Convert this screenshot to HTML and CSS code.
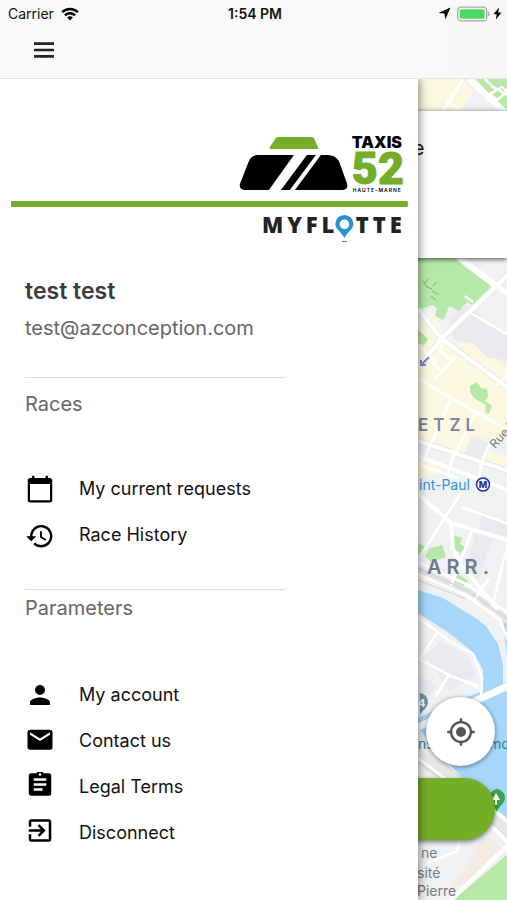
FILE: index.html
```html
<!DOCTYPE html>
<html lang="en">
  <head>
    <meta charset="UTF-8" />
    <meta name="viewport" content="width=device-width, initial-scale=1" />
    <title>MyFlotte</title>
    <link rel="stylesheet" href="styles.css">
  </head>
  <body>
    <header class="header">
      <div class="status">
        <div class="status-left">
          <span>Carrier</span>
          <svg width="18" height="14" viewBox="0 0 18 14" aria-hidden="true">
            <g fill="none" stroke="#000" stroke-width="2.4">
              <path d="M1.2 5.2a11 11 0 0 1 15.6 0" />
              <path d="M4 8.4a7 7 0 0 1 10 0" />
            </g>
            <path d="M9 13.4L6.2 10.6a4 4 0 0 1 5.6 0z" />
          </svg>
        </div>
        <b class="time">1:54 PM</b>
        <div class="status-right">
          <svg width="13" height="13" viewBox="0 0 13 13" aria-hidden="true">
            <path d="M12.5 .5L7.3 12.5 6.5 6.6.5 6z" />
          </svg>
          <svg width="33" height="16" viewBox="0 0 33 16" aria-hidden="true">
            <rect x=".7" y="1.2" width="29" height="13.6" rx="3.5" fill="#fff" stroke="#a8a8a8" stroke-width="1.3" />
            <rect x="2.6" y="3.2" width="25" height="9.6" rx="1.5" fill="#4cd964" />
            <path d="M31 5.5q1.6.8 1.6 2.5T31 10.5z" fill="#a8a8a8" />
          </svg>
          <svg width="9" height="13" viewBox="0 0 9 13" aria-hidden="true">
            <path d="M6 .5L.5 7.2h3.2L2.8 12.5 8.5 5.4H5.2z" />
          </svg>
        </div>
      </div>
      <div class="toolbar">
        <button class="menu-button" aria-label="Menu">
          <svg width="20" height="16" viewBox="0 0 20 16" aria-hidden="true">
            <path d="M0 1.6h20M0 8h20M0 14.4h20" stroke="#222" stroke-width="2.6" />
          </svg>
        </button>
      </div>
    </header>

    <div class="stage">
      <nav class="drawer">
        <svg class="logo" viewBox="11 133 397 112" role="img" aria-label="Taxis 52 Haute-Marne, MyFlotte">
          <path d="M276 138q1-1 3-1h32q2 0 3 1l4 9q1 2-1 2h-46q-2 0-1-2z" fill="#74ae28" />
          <path d="M257 155h37l-25 35h-25q-5-1-4-6l9-23q2-5 8-6z" />
          <path d="M307 155h9l-26 35h-9z" />
          <path d="M321 155h7q7 0 11 6l8 22q2 6-4 7h-48z" />
          <text x="352" y="148" class="logo-taxis">TAXIS</text>
          <text x="352" y="184" class="logo-number">52</text>
          <text x="353" y="192" class="logo-region">HAUTE-MARNE</text>
          <rect x="11" y="201" width="397" height="6" rx="1" fill="#74ae28" />
          <text x="262" y="233" class="logo-name">MYFL</text>
          <path d="M344.500 215a9 9 0 0 0-9 9c0 5 5 7 9 14 4-7 9-9 9-14a9 9 0 0 0-9-9zm0 4.500a4.800 4.800 0 1 1 0 9.600 4.800 4.800 0 0 1 0-9.600z" fill="#2593d1" fill-rule="evenodd" />
          <path d="M342 241.500h5" stroke="#777" />
          <text x="356" y="233" class="logo-name">TTE</text>
        </svg>

        <div class="user">
          <h1 class="user-name">test test</h1>
          <p class="user-mail">test@azconception.com</p>
        </div>

        <section class="group">
          <h2 class="group-title">Races</h2>
          <ul class="menu">
            <li>
              <a href="#requests">
                <svg viewBox="0 0 24 24" aria-hidden="true">
                  <path d="M19.800 3.200H18.300V1.300h-1.800v1.900H7.500V1.300H5.700v1.900H4.200C3 3.200 2.200 4 2.200 5v15.900c0 1 .8 1.800 1.800 1.800h16c1 0 1.800-.8 1.800-1.800V5c0-1-.8-1.800-2-1.800zM20 20.900H4V8h16z" />
                </svg>
                My current requests
              </a>
            </li>
            <li>
              <a href="#history">
                <svg viewBox="0 0 24 24" aria-hidden="true">
                  <path d="M13 4a9 9 0 0 0-9 9H1l3.900 3.900.1.100L9 13H6a7 7 0 1 1 2.100 4.900l-1.500 1.500A9 9 0 1 0 13 4zm-1 5v5l4.300 2.500.7-1.200-3.500-2.100V9z" />
                </svg>
                Race History
              </a>
            </li>
          </ul>
        </section>

        <section class="group group-params">
          <h2 class="group-title">Parameters</h2>
          <ul class="menu">
            <li>
              <a href="#account">
                <svg viewBox="0 0 24 24" aria-hidden="true">
                  <path d="M12 12a4 4 0 1 0 0-8 4 4 0 0 0 0 8zm0 2c-2.700 0-8 1.300-8 4v2h16v-2c0-2.700-5.300-4-8-4z" />
                </svg>
                My account
              </a>
            </li>
            <li>
              <a href="#contact">
                <svg viewBox="0 0 24 24" aria-hidden="true">
                  <path d="M20 3H4a2 2 0 0 0-2 2v12c0 1.100.9 2 2 2h16a2 2 0 0 0 2-2V5a2 2 0 0 0-2-2zm0 4l-8 5-8-5V5l8 5 8-5z" />
                </svg>
                Contact us
              </a>
            </li>
            <li>
              <a href="#legal">
                <svg viewBox="0 0 24 24" aria-hidden="true">
                  <path d="M19 1h-4.200a3 3 0 0 0-5.600 0H5a2 2 0 0 0-2 2v14c0 1.100.9 2 2 2h14a2 2 0 0 0 2-2V3a2 2 0 0 0-2-2zm-7 0a1 1 0 1 1 0 2 1 1 0 0 1 0-2zm2 14H7v-2h7zm3-4H7V9h10zm0-4H7V5h10z" />
                </svg>
                Legal Terms
              </a>
            </li>
            <li>
              <a href="#logout">
                <svg viewBox="0 0 24 24" aria-hidden="true">
                  <path d="M10.100 13.600L11.500 15l5-5-5-5-1.400 1.400L12.700 9H3v2h9.700zM19 1H5a2 2 0 0 0-2 2v4h2V3h14v14H5v-4H3v4c0 1.100.9 2 2 2h14a2 2 0 0 0 2-2V3a2 2 0 0 0-2-2z" />
                </svg>
                Disconnect
              </a>
            </li>
          </ul>
        </section>
      </nav>

      <main class="content">
        <svg class="map" viewBox="417 79 90 821" preserveAspectRatio="xMinYMin slice" aria-hidden="true">
          <rect x="417" y="79" width="90" height="821" fill="#f0f1f3" />
          <!-- blocks -->
          <g fill="#fcf7e0">
            <path d="M417 79h45l10 14-12 18h-43z" />
            <path d="M417 312l18 2 6 18 14 13 14-6 38 28v76l-16-4-20-4-8 18-46-18z" />
            <path d="M417 458l30 12-30 8zM482 450l25 6v14l-30-8z" />
          </g>
          <g fill="#e9eaee">
            <path d="M447 318l18-12 42 30v24l-20-2-14-14-20-4z" />
            <path d="M470 438l20 5-8 17-18-5zM482 512l25 12v16l-30-8zM474 534l18 5-14 40-14-10z" />
            <path d="M425 655l14-14 28 15 8 18-26 18zM417 676l20 9-20 22z" />
          </g>
          <!-- parks -->
          <g fill="#b6e9a8">
            <path d="M475 79h32v33l-6-2z" />
            <path d="M417 258h41l33 28-20 19-5-3-8 9-10-5-2 6-4 8-8-4 2-8-5-3-14 5z" />
            <path d="M417 330l10 9-4 6-6-2zM469 386l7-4 4 6 6 1 1 8-3 4 7 5-3 8-4-2 1-7-12-7-4-6z" />
            <path d="M417 543l7 4-2 8-5-2zM429 548l12-3 4 12-15 5-6-6zM453 535l8 3-2 6 5 3-4 6-9-4zM450 583l7-9 10 7-9 10z" />
            <path d="M507 854v46h-55z" />
          </g>
          <path d="M466 866l17-30 21 13-38 34-18 6z" fill="#f2ebe4" />
          <!-- river -->
          <g fill="#a6d7fb">
            <path d="M417 590l25 8 34 21 9 7 12 18 5 20v25l-20 8v-27l-9-17-25-20-31-20z" />
            <path d="M417 718l30-14 60-22v138l-48-44-42-48zM502 620l5 5v40z" />
          </g>
          <path d="M417 748l35 24 55 52v24l-40-50-50-32z" fill="#e7e9e9" />
          <!-- road edges -->
          <g fill="none" stroke="#e2e4e8" stroke-width="6">
            <path d="M417 309l23 29 67 50M507 275L441 338l-24 30M417 570l50 21 40 28M417 441l90 30" />
          </g>
          <g fill="none" stroke="#fff" stroke-width="2.500">
            <path d="M462 79l-20 32M446 101l18 12M475 84l12 11 14-8 6 5M484 79l8 8 15 8M489 94l7 6 11-9" />
            <path d="M468 312l39 23M464 296l8 6M417 378l33 20 57 32M450 398l-30 68M475 412l-28 57M433 380l22-23M437 349l14 12M437 349l9-9M427 360l14 11M417 346l18 16M507 374l-12 12" />
            <path d="M490 441l-12 26M454 450l-8 28M417 464l40 14M460 493l-43 66M472 528l-22 58M507 543l-16 64M472 602l16-24M461 507l46 17M482 458l-8 38" />
            <path d="M417 617l30 23 25 14 9 24-1 20M436 633l-18 27M418 659l30 16 30 12M448 675l-14 22M450 820l10 16-4 15-30 12M417 758l40 30" />
          </g>
          <g fill="none" stroke="#fff" stroke-width="4.500">
            <path d="M457 257l38 29M468 79l36 33" stroke-width="6" />
            <path d="M417 309l23 29 67 50M507 275L441 338l-24 30M496 286l11 8" />
            <path d="M417 441l90 30M417 456l90 34M417 494l33 29 57 17M450 523l2 26 9 17 36 44" stroke-width="4" />
            <path d="M417 562l50 23 40 28M417 574l48 21 33 24 9 20" stroke-width="3" />
            <path d="M417 727l90-41" stroke-width="7" />
            <path d="M495 812l12 9M507 845L450 900M492 826l15 17" />
          </g>
          <g fill="none" stroke="#cbd1c8" stroke-width="1">
            <path d="M417 568l50 23 40 28M417 762l38 28 52 48M440 761l67 58M417 580l48 19" />
            <path d="M422 281l4 6 5 2M427 279l-3 4M431 291l6 3M432 286l4-4M430 296l5 4" stroke="#6fb778" />
          </g>
          <path d="M428 357l-8 8m0-5v5h5" fill="none" stroke="#8087b8" stroke-width="2" />
          <!-- labels -->
          <text x="417" y="431" class="map-area">ETZL</text>
          <text x="426" y="574" class="map-area map-district">ARR.</text>
          <text x="494" y="449" class="map-street map-rue" transform="rotate(-48 494 449)">Rue P</text>
          <text x="418" y="490" class="map-metro">int-Paul</text>
          <circle cx="482" cy="484.500" r="6.500" fill="#fff" stroke="#2e2c91" stroke-width="1.500" />
          <text x="482" y="488" class="map-m">M</text>
          <text x="417" y="749" class="map-place">ns</text>
          <text x="488" y="749" class="map-place">mo</text>
          <path d="M419 693a9 9 0 0 1 8 9c0 6-6 8-8 13z" fill="#6d8fa8" />
          <text x="417" y="707" class="map-pin-number">4</text>
          <path d="M496 789a9 9 0 0 1 8 9c0 6-7 8-8 14-2-6-8-8-8-14a9 9 0 0 1 8-9z" fill="#3ba549" />
          <path d="M495 793l4 7h-3v5h-2v-5h-3z" fill="#fff" />
          <text x="420" y="858" class="map-street">ne</text>
          <text x="416" y="878" class="map-street">sité</text>
          <text x="416" y="896" class="map-street">Pierre</text>
        </svg>

        <div class="card">e</div>
        <div class="actions">
          <button class="locate" aria-label="My location">
            <svg width="30" height="30" viewBox="0 0 24 24" aria-hidden="true">
              <path d="M12 8a4 4 0 1 0 0 8 4 4 0 0 0 0-8zm8.900 3A9 9 0 0 0 13 3.100V1h-2v2.100A9 9 0 0 0 3.100 11H1v2h2.100a9 9 0 0 0 7.900 7.900V23h2v-2.100a9 9 0 0 0 7.900-7.900H23v-2zM12 19a7 7 0 1 1 0-14 7 7 0 0 1 0 14z" fill="#555" />
            </svg>
          </button>
          <button class="order" aria-label="Order"></button>
        </div>
      </main>
    </div>
  </body>
</html>
```
FILE: styles.css
```css
* {
  box-sizing: border-box;
}

body {
  display: flex;
  flex-direction: column;
  min-height: 100vh;
  margin: 0;
  overflow-x: hidden;
  background: #fff;
  color: #111;
  font-family: Inter, "Liberation Sans", sans-serif;
}

button {
  padding: 0;
  border: none;
  background: transparent;
}

/* header */

.header {
  position: relative;
  z-index: 2;
  height: 79px;
  border-bottom: 1px solid #e4e4e4;
  background: linear-gradient(90deg, #f9f9f9 80%, #f6f6f4);
}

.status {
  display: grid;
  grid-template-columns: 1fr auto 1fr;
  align-items: center;
  height: 27px;
  padding: 0 5px 0 8px;
  font-size: 14px;
}

.status-left,
.status-right {
  display: flex;
  align-items: center;
  gap: 7px;
}

.status-right {
  gap: 3px;
  justify-content: flex-end;
}

.status-right svg:first-child {
  margin-right: 3px;
}

.time {
  font-weight: 600;
}

.toolbar {
  display: flex;
  align-items: center;
  height: 45px;
  padding-left: 24px;
}

.menu-button {
  width: 40px;
  height: 40px;
}

.menu-button svg {
  display: block;
  margin: auto;
}

/* drawer */

.stage {
  display: flex;
  flex: 1;
}

.drawer {
  position: relative;
  z-index: 1;
  flex: 0 0 82.4%;
  padding-top: 54px;
  background: #fff;
  box-shadow: 0 0 10px rgba(0, 0, 0, 0.6);
}

.logo {
  display: block;
  width: 95%;
  margin: 0 10px 0 11px;
}

.logo-taxis {
  font: 900 16px Inter, sans-serif;
}

.logo-number {
  fill: #74ae28;
  stroke: #74ae28;
  font: 900 45px Roboto, sans-serif;
}

.logo-region {
  font: 600 5px Inter, sans-serif;
  letter-spacing: 1px;
}

.logo-name {
  fill: #222;
  font: 800 22px "Open Sans", sans-serif;
  letter-spacing: 4px;
}

.user {
  padding: 32px 25px 36px;
}

.user-name {
  margin: 0 0 10px;
  color: #3c3c3c;
  font-size: 23px;
  font-weight: 600;
  line-height: 28px;
}

.user-mail {
  margin: 0;
  color: #666;
  font-size: 20px;
  line-height: 26px;
}

.group {
  padding: 0 25px 31px;
}

.group-title {
  width: 260px;
  margin: 0 0 48px;
  padding-top: 12px;
  border-top: 1px solid #dcdcdc;
  color: #666;
  font-size: 20px;
  font-weight: 400;
  line-height: 28px;
}

.group-params .group-title {
  margin-bottom: 50px;
  padding-top: 4px;
}

.menu {
  margin: 0;
  padding: 0;
  list-style: none;
}

.menu a {
  display: flex;
  align-items: center;
  gap: 24px;
  height: 46px;
  color: #111;
  font-size: 18px;
  text-decoration: none;
}

.menu svg {
  width: 30px;
  height: 30px;
  fill: #000;
}

/* map behind the drawer */

.content {
  position: relative;
  display: flex;
  flex: 1;
  flex-direction: column;
  justify-content: space-between;
  min-width: 0;
}

.map {
  position: absolute;
  inset: 0;
  width: 100%;
  height: 100%;
}

.map-area {
  fill: #7b82a0;
  font: 600 17px Inter, sans-serif;
  letter-spacing: 5px;
}

.map-district {
  fill: #71798a;
  font-size: 20px;
}

.map-street {
  fill: #777b82;
  font: 14px Inter, sans-serif;
}

.map-rue {
  font-size: 12px;
}

.map-metro {
  fill: #2f96d8;
  font: 14px Inter, sans-serif;
}

.map-m {
  fill: #2e2c91;
  font: 800 9px Inter, sans-serif;
  text-anchor: middle;
}

.map-place {
  fill: #2b8793;
  font: 14px Inter, sans-serif;
}

.map-pin-number {
  fill: #fff;
  font: 700 11px Inter, sans-serif;
}

.card {
  position: relative;
  height: 147px;
  margin: 32px 0 0 -16px;
  padding: 25px 11px;
  background: #fff;
  box-shadow: 0 1px 5px rgba(0, 0, 0, 0.7);
  font-size: 20px;
  line-height: 24px;
}

.actions {
  position: relative;
  display: flex;
  flex-direction: column;
  align-items: flex-end;
  gap: 12px;
  padding: 0 12px 60px 0;
}

.locate {
  display: flex;
  align-items: center;
  justify-content: center;
  width: 69px;
  height: 69px;
  border-radius: 50%;
  background: #fff;
  box-shadow: 0 1px 5px rgba(0, 0, 0, 0.5);
}

.order {
  width: 120px;
  height: 62px;
  border-radius: 31px;
  background: #74ae28;
  box-shadow: 0 2px 5px rgba(0, 0, 0, 0.5);
}
```
